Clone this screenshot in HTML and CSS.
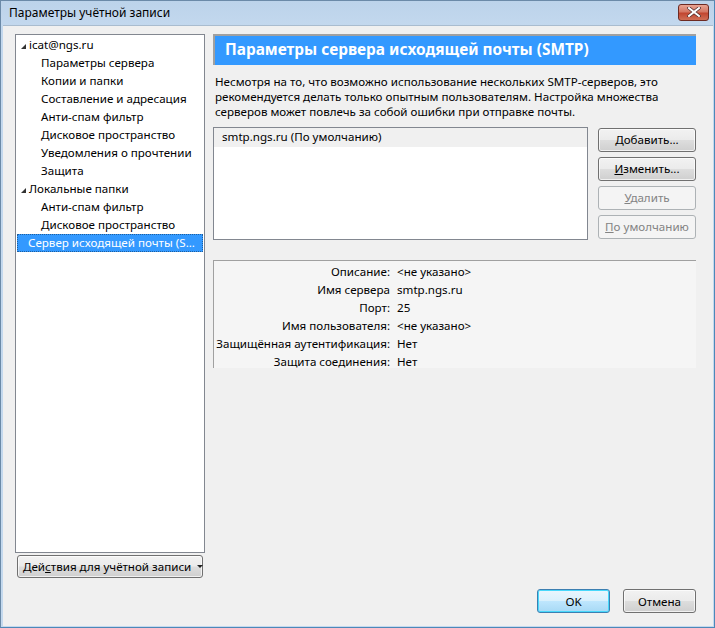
FILE: index.html
```html
<!DOCTYPE html>
<html lang="ru">
<head>
<meta charset="utf-8">
<title>Параметры учётной записи</title>
<link rel="stylesheet" href="styles.css">
</head>
<body>
<div class="window">
  <div class="titlebar">
    <span class="title">Параметры учётной записи</span>
    <div class="close">
      <svg width="14" height="10" viewBox="0 0 14 10"><path d="M2 1 L12 9 M12 1 L2 9" stroke="#4a2a2a" stroke-width="3.4" stroke-linecap="square"/><path d="M2 1 L12 9 M12 1 L2 9" stroke="#ffffff" stroke-width="2" stroke-linecap="square"/></svg>
    </div>
  </div>
  <div class="client">
    <div class="main">
      <div class="leftcol">
        <div class="tree">
          <div class="node root"><span class="arrow"></span>icat@ngs.ru</div>
          <div class="node child">Параметры сервера</div>
          <div class="node child">Копии и папки</div>
          <div class="node child">Составление и адресация</div>
          <div class="node child">Анти-спам фильтр</div>
          <div class="node child">Дисковое пространство</div>
          <div class="node child">Уведомления о прочтении</div>
          <div class="node child">Защита</div>
          <div class="node root"><span class="arrow"></span>Локальные папки</div>
          <div class="node child">Анти-спам фильтр</div>
          <div class="node child">Дисковое пространство</div>
          <div class="node selected">Сервер исходящей почты (S...</div>
        </div>
        <button class="btn actions"><span class="actlabel">Дей<u>с</u>твия для учётной записи</span><span class="drop"></span></button>
      </div>
      <div class="rightcol">
        <div class="header">Параметры сервера исходящей почты (SMTP)</div>
        <p class="desc">Несмотря на то, что возможно использование нескольких SMTP-серверов, это рекомендуется делать только опытным пользователям. Настройка множества серверов может повлечь за собой ошибки при отправке почты.</p>
        <div class="listrow">
          <div class="list">
            <div class="item">smtp.ngs.ru (По умолчанию)</div>
          </div>
          <div class="sidebtns">
            <button class="btn side"><u>Д</u>обавить...</button>
            <button class="btn side"><u>И</u>зменить...</button>
            <button class="btn side disabled"><u>У</u>далить</button>
            <button class="btn side disabled"><u>П</u>о умолчанию</button>
          </div>
        </div>
        <div class="details">
          <span class="lbl">Описание:</span><span class="val">&lt;не указано&gt;</span>
          <span class="lbl">Имя сервера</span><span class="val">smtp.ngs.ru</span>
          <span class="lbl">Порт:</span><span class="val">25</span>
          <span class="lbl">Имя пользователя:</span><span class="val">&lt;не указано&gt;</span>
          <span class="lbl">Защищённая аутентификация:</span><span class="val">Нет</span>
          <span class="lbl">Защита соединения:</span><span class="val">Нет</span>
        </div>
      </div>
    </div>
    <div class="footer">
      <button class="btn foot ok">OK</button>
      <button class="btn foot">Отмена</button>
    </div>
  </div>
</div>
</body>
</html>
```
FILE: styles.css
```css
* { box-sizing: border-box; }
html, body { margin: 0; padding: 0; }
body {
  width: 715px;
  height: 628px;
  overflow: hidden;
  font-family: "Noto Sans", "Open Sans", sans-serif;
  font-size: 11.6px;
  color: #000;
}
.window {
  width: 715px;
  height: 628px;
  border: 1px solid #6b8aa8;
  border-right-color: #4d88b8;
  border-bottom-color: #4d88b8;
  background: linear-gradient(#bcd3ea, #c3d8ee 25px, #c4d9ee);
  display: flex;
  flex-direction: column;
  padding: 0 1px 1px 1px;
}
.titlebar {
  height: 24px;
  display: flex;
  align-items: center;
  justify-content: space-between;
  padding: 0 4px 0 7px;
  flex: none;
}
.title {
  font-size: 12px;
  color: #000;
  line-height: 16px;
}
.close {
  width: 31px;
  height: 17px;
  margin-top: -2px;
  border: 1px solid #6d2a22;
  border-radius: 3px;
  background: linear-gradient(#e8a392, #d47764 45%, #c24630 55%, #cf6f56);
  display: flex;
  align-items: center;
  justify-content: center;
}
.client {
  flex: 1;
  background: #f0f0f0;
  margin-left: 1px;
  border-top: 1px solid #a9bccf;
  padding: 8px 17px 0 12px;
  display: flex;
  flex-direction: column;
}
.main {
  display: flex;
  gap: 8px;
}
.leftcol {
  width: 190px;
  display: flex;
  flex-direction: column;
  gap: 2px;
}
.tree {
  height: 519px;
  background: #fff;
  border: 1px solid #828790;
  padding: 1px 1px;
}
.node {
  height: 18px;
  line-height: 18px;
  white-space: nowrap;
  display: flex;
  align-items: center;
}
.root { padding-left: 4px; }
.child { padding-left: 24px; }
.arrow {
  width: 0;
  height: 0;
  border-left: 5px solid transparent;
  border-bottom: 5px solid #333;
  margin-right: 3px;
  margin-top: 2px;
}
.selected {
  background: #3399ff;
  color: #fff;
  padding-left: 11px;
  outline: 1px dotted #1f5f9f;
  outline-offset: -1px;
}
.btn {
  font-family: inherit;
  font-size: 11.6px;
  color: #000;
  border: 1px solid #707070;
  border-radius: 3px;
  background: linear-gradient(#f2f2f2, #ebebeb 48%, #dddddd 52%, #cfcfcf);
  padding: 0;
  margin: 0;
  box-shadow: inset 0 0 0 1px rgba(255,255,255,0.7);
}
.actions {
  height: 23px;
  width: 186px;
  margin: 0 2px;
  padding-left: 5px;
  display: flex;
  align-items: center;
  white-space: nowrap;
}
.actlabel { white-space: nowrap; }
.drop {
  width: 0;
  height: 0;
  border-left: 3px solid transparent;
  border-right: 3px solid transparent;
  border-top: 3px solid #222;
  margin-left: 6px;
}
.rightcol {
  width: 483px;
  display: flex;
  flex-direction: column;
}
.header {
  height: 31px;
  background: #3399ff;
  border-top: 2px solid #a0a0a0;
  border-left: 2px solid #a0a0a0;
  color: #fff;
  font-weight: bold;
  font-size: 15.4px;
  line-height: 28px;
  padding-left: 10px;
  white-space: nowrap;
}
.desc {
  margin: 9px 0 0 2px;
  line-height: 15px;
}
.listrow {
  display: flex;
  gap: 10px;
  margin-top: 8px;
}
.list {
  width: 375px;
  height: 113px;
  background: #fff;
  border: 1px solid #828790;
}
.item {
  height: 19px;
  line-height: 18px;
  background: #f0f0f0;
  padding-left: 8px;
}
.sidebtns {
  width: 98px;
  display: flex;
  flex-direction: column;
  gap: 5px;
  margin-top: 1px;
}
.side {
  height: 24px;
  line-height: 20px;
}
.disabled {
  color: #838383;
  border-color: #adb2b5;
  background: #f4f4f4;
  box-shadow: none;
}
.details {
  margin-top: 20px;
  height: 108px;
  border-top: 1px solid #a0a0a0;
  border-left: 1px solid #a0a0a0;
  background: #f5f5f5;
  display: grid;
  grid-template-columns: 176px 1fr;
  column-gap: 7px;
  grid-auto-rows: 18px;
  align-content: start;
  padding-top: 2px;
}
.lbl {
  text-align: right;
  white-space: nowrap;
  line-height: 18px;
}
.val {
  line-height: 18px;
  white-space: nowrap;
}
.footer {
  margin-top: 11px;
  display: flex;
  justify-content: flex-end;
  gap: 13px;
}
.foot {
  width: 73px;
  height: 24px;
}
.ok {
  border-color: #3c7fb1;
  box-shadow: inset 0 0 0 1px #48d8fb;
  background: linear-gradient(#eaf6fd, #d9f0fc 48%, #bee6fd 52%, #a7d9f5);
}
```
